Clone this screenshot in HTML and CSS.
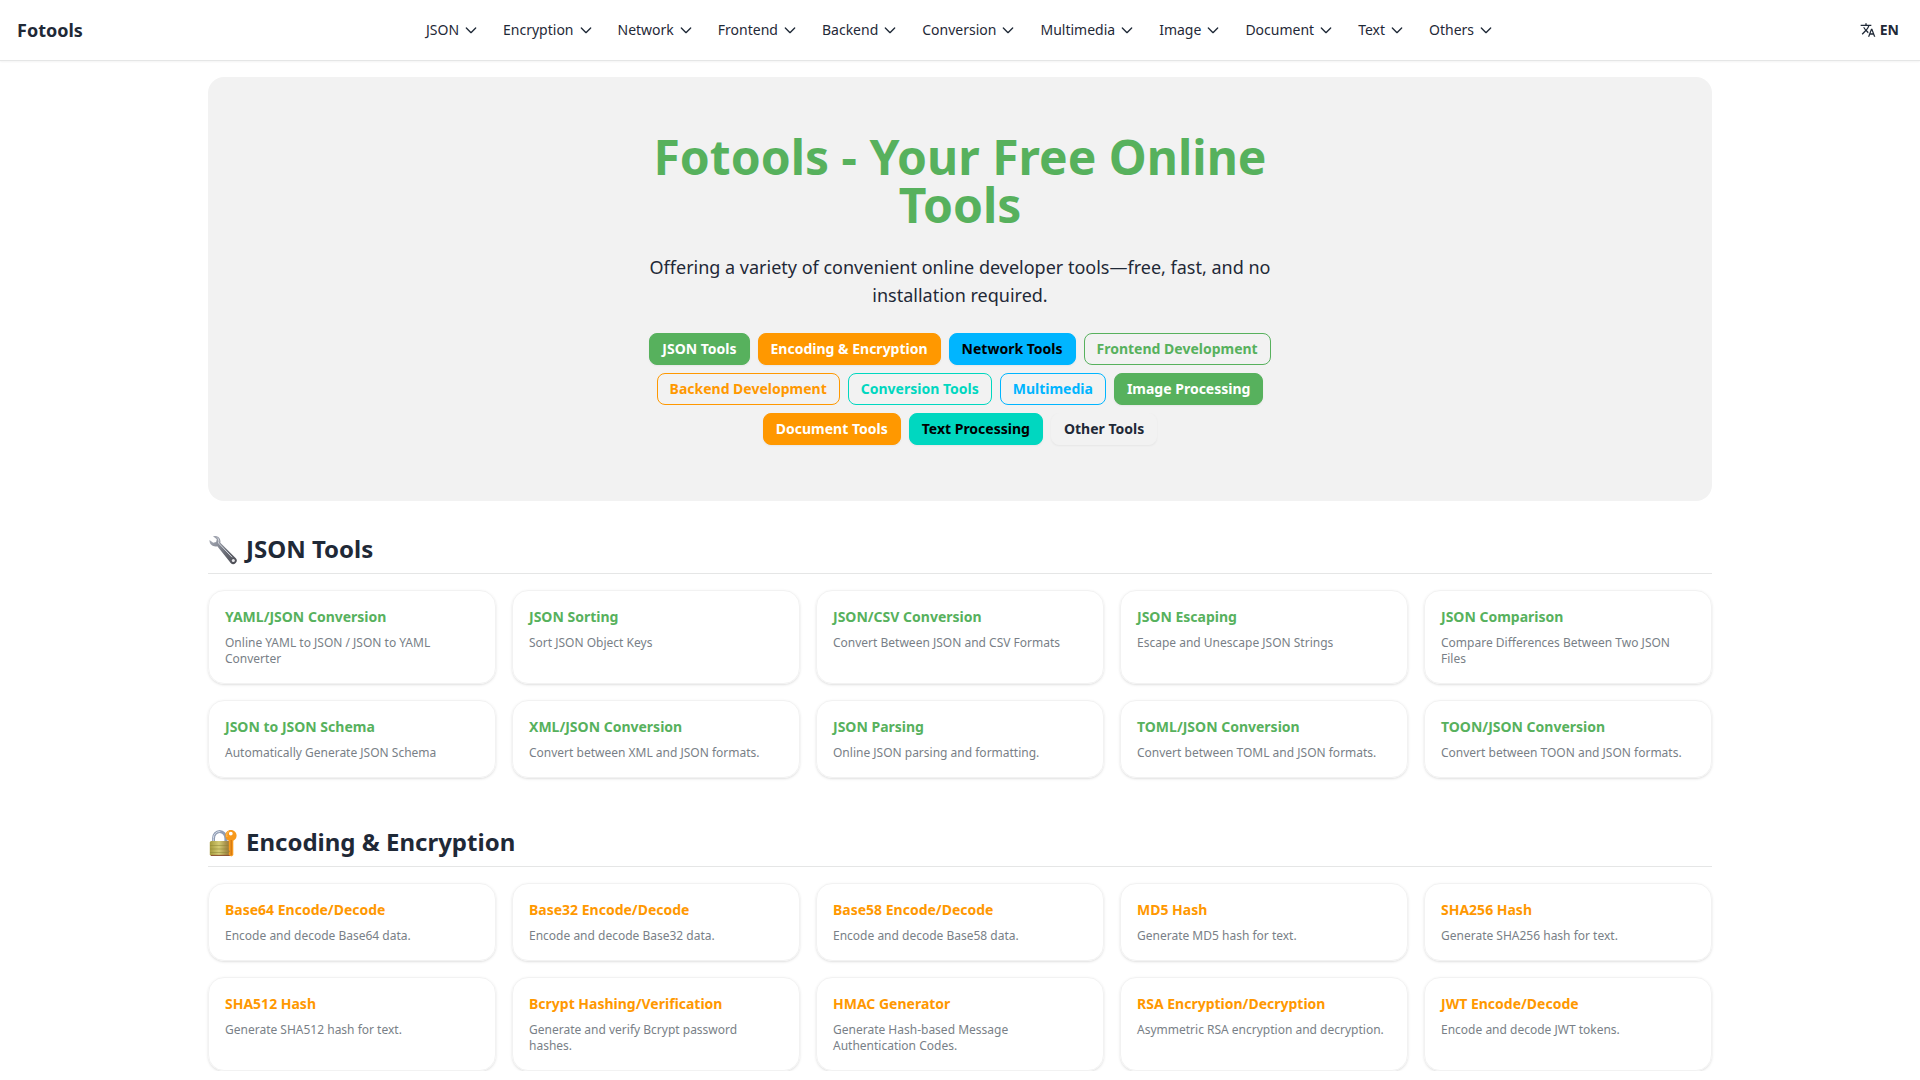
FILE: index.html
```html
<!DOCTYPE html>
<html lang="en">
<head>
<meta charset="utf-8">
<meta name="viewport" content="width=device-width, initial-scale=1">
<title>Fotools - Your Free Online Tools</title>
<link rel="stylesheet" href="styles.css">
</head>
<body>
<svg class="sprite" aria-hidden="true">
  <symbol id="chevron" viewBox="0 0 24 24"><path d="M19 9l-7 7-7-7" fill="none" stroke="currentColor" stroke-width="2" stroke-linecap="round" stroke-linejoin="round"/></symbol>
  <symbol id="translate" viewBox="0 0 24 24"><path fill="currentColor" d="M12.87 15.07l-2.54-2.51.03-.03A17.52 17.52 0 0 0 14.07 6H17V4h-7V2H8v2H1v2h11.17C11.5 7.92 10.44 9.75 9 11.35 8.07 10.32 7.3 9.19 6.69 8h-2c.73 1.63 1.73 3.17 2.98 4.56l-5.09 5.02L4 19l5-5 3.11 3.11.76-2.04zM18.500 10h-2L12 22h2l1.120-3h4.750L21 22h2l-4.500-12zm-2.620 7l1.620-4.330L19.120 17h-3.240z"/></symbol>
</svg>
<header class="navbar">
  <a class="brand" href="#">Fotools</a>
  <nav class="menu" aria-label="Tool categories">
    <button class="menu-item" type="button">JSON<svg class="icon"><use href="#chevron"/></svg></button>
    <button class="menu-item" type="button">Encryption<svg class="icon"><use href="#chevron"/></svg></button>
    <button class="menu-item" type="button">Network<svg class="icon"><use href="#chevron"/></svg></button>
    <button class="menu-item" type="button">Frontend<svg class="icon"><use href="#chevron"/></svg></button>
    <button class="menu-item" type="button">Backend<svg class="icon"><use href="#chevron"/></svg></button>
    <button class="menu-item" type="button">Conversion<svg class="icon"><use href="#chevron"/></svg></button>
    <button class="menu-item" type="button">Multimedia<svg class="icon"><use href="#chevron"/></svg></button>
    <button class="menu-item" type="button">Image<svg class="icon"><use href="#chevron"/></svg></button>
    <button class="menu-item" type="button">Document<svg class="icon"><use href="#chevron"/></svg></button>
    <button class="menu-item" type="button">Text<svg class="icon"><use href="#chevron"/></svg></button>
    <button class="menu-item" type="button">Others<svg class="icon"><use href="#chevron"/></svg></button>
  </nav>
  <div class="navbar-end">
    <button class="language" type="button"><svg class="icon"><use href="#translate"/></svg>EN</button>
  </div>
</header>
<main class="container">
  <section class="hero">
    <div class="hero-content">
      <h1 class="hero-title">Fotools - Your Free Online Tools</h1>
      <p class="hero-text">Offering a variety of convenient online developer tools—free, fast, and no installation required.</p>
      <div class="hero-links">
        <a class="btn btn-primary" href="#json">JSON Tools</a>
        <a class="btn btn-secondary" href="#encryption">Encoding &amp; Encryption</a>
        <a class="btn btn-info" href="#network">Network Tools</a>
        <a class="btn btn-outline outline-primary" href="#frontend">Frontend Development</a>
        <a class="btn btn-outline outline-secondary" href="#backend">Backend Development</a>
        <a class="btn btn-outline outline-accent" href="#conversion">Conversion Tools</a>
        <a class="btn btn-outline outline-info" href="#multimedia">Multimedia</a>
        <a class="btn btn-primary" href="#image">Image Processing</a>
        <a class="btn btn-secondary" href="#document">Document Tools</a>
        <a class="btn btn-accent" href="#text">Text Processing</a>
        <a class="btn btn-plain" href="#others">Other Tools</a>
      </div>
    </div>
  </section>
  <section class="tools tools-primary" id="json">
    <h2 class="tools-title">
      <svg class="title-icon" viewBox="0 0 32 32" aria-hidden="true">
        <defs>
          <linearGradient id="steel" x1="2" y1="4" x2="28" y2="30" gradientUnits="userSpaceOnUse"><stop offset="0" stop-color="#a9adb8"/><stop offset=".3" stop-color="#8b8f9a"/><stop offset=".6" stop-color="#6a6d76"/><stop offset="1" stop-color="#4c4d54"/></linearGradient>
        </defs>
        <path fill="url(#steel)" d="M5 3.200C9.500 2 13.200 5 12.300 9.800L27.600 25a3.500 3.500 0 0 1-4.900 5L9.300 13.300C5 14.200 1.200 11.500 1.500 7l3.700 2.700 2.900-.6.700-2.900z"/>
        <path fill="none" stroke="#d3d6de" stroke-width="1" stroke-linecap="round" d="M9.500 4.800c1.400 1.200 1.600 3 1 5.200l13.300 14"/>
        <circle cx="25.300" cy="27.500" r="1.500" fill="#e9e9ec"/>
      </svg>
      JSON Tools
    </h2>
    <div class="grid">
      <a class="card" href="#"><h3>YAML/JSON Conversion</h3><p>Online YAML to JSON / JSON to YAML Converter</p></a>
      <a class="card" href="#"><h3>JSON Sorting</h3><p>Sort JSON Object Keys</p></a>
      <a class="card" href="#"><h3>JSON/CSV Conversion</h3><p>Convert Between JSON and CSV Formats</p></a>
      <a class="card" href="#"><h3>JSON Escaping</h3><p>Escape and Unescape JSON Strings</p></a>
      <a class="card" href="#"><h3>JSON Comparison</h3><p>Compare Differences Between Two JSON Files</p></a>
      <a class="card" href="#"><h3>JSON to JSON Schema</h3><p>Automatically Generate JSON Schema</p></a>
      <a class="card" href="#"><h3>XML/JSON Conversion</h3><p>Convert between XML and JSON formats.</p></a>
      <a class="card" href="#"><h3>JSON Parsing</h3><p>Online JSON parsing and formatting.</p></a>
      <a class="card" href="#"><h3>TOML/JSON Conversion</h3><p>Convert between TOML and JSON formats.</p></a>
      <a class="card" href="#"><h3>TOON/JSON Conversion</h3><p>Convert between TOON and JSON formats.</p></a>
    </div>
  </section>
  <section class="tools tools-secondary" id="encryption">
    <h2 class="tools-title">
      <svg class="title-icon" viewBox="0 0 32 32" aria-hidden="true">
        <defs>
          <linearGradient id="brass"><stop offset="0" stop-color="#a59a3c"/><stop offset=".4" stop-color="#d3cb74"/><stop offset=".7" stop-color="#a8914a"/><stop offset="1" stop-color="#8a6534"/></linearGradient>
        </defs>
        <path fill="none" stroke="#8f9cb3" stroke-width="3" d="M5.500 17v-4.500a6.200 7 0 0 1 12.400 0V17"/>
        <path fill="none" stroke="#d4dbe8" stroke-width="1" d="M5.300 17v-4.500a6.400 7.200 0 0 1 7-7"/>
        <rect x="1.800" y="15" width="23" height="14.800" rx="1.500" fill="url(#brass)"/>
        <path stroke="#8c8434" stroke-opacity=".5" stroke-width="1" d="M2 19.500h22M2 23h22M2 26.500h22"/>
        <path stroke="#8a4a2c" stroke-width="1" d="M3 29.400h20"/>
        <path fill="#f7991c" fill-rule="evenodd" d="M22.800 4c3.400 0 5.800 2.500 5.800 5.500 0 2.400-1.300 4.200-3.300 5.300V29l-2 1.500-2.500-1.500v-2.500l1-1-1-1.500V14.800c-2-1-3.500-2.900-3.500-5.300C17.300 6.500 19.500 4 22.800 4zm0 1.700a1.900 1.900 0 1 0 0 3.800 1.900 1.900 0 0 0 0-3.800z"/>
        <path stroke="#c96f10" stroke-width="1" d="M23.200 14v15"/>
        <path fill="none" stroke="#ffc25c" stroke-width="1" d="M19 11c-.8-2.500 0-4.500 2-5.600"/>
      </svg>
      Encoding &amp; Encryption
    </h2>
    <div class="grid">
      <a class="card" href="#"><h3>Base64 Encode/Decode</h3><p>Encode and decode Base64 data.</p></a>
      <a class="card" href="#"><h3>Base32 Encode/Decode</h3><p>Encode and decode Base32 data.</p></a>
      <a class="card" href="#"><h3>Base58 Encode/Decode</h3><p>Encode and decode Base58 data.</p></a>
      <a class="card" href="#"><h3>MD5 Hash</h3><p>Generate MD5 hash for text.</p></a>
      <a class="card" href="#"><h3>SHA256 Hash</h3><p>Generate SHA256 hash for text.</p></a>
      <a class="card" href="#"><h3>SHA512 Hash</h3><p>Generate SHA512 hash for text.</p></a>
      <a class="card" href="#"><h3>Bcrypt Hashing/Verification</h3><p>Generate and verify Bcrypt password hashes.</p></a>
      <a class="card" href="#"><h3>HMAC Generator</h3><p>Generate Hash-based Message Authentication Codes.</p></a>
      <a class="card" href="#"><h3>RSA Encryption/Decryption</h3><p>Asymmetric RSA encryption and decryption.</p></a>
      <a class="card" href="#"><h3>JWT Encode/Decode</h3><p>Encode and decode JWT tokens.</p></a>
    </div>
  </section>
</main>
</body>
</html>
```
FILE: styles.css
```css
:root {
  --primary: #57b15d;
  --secondary: #ff9800;
  --accent: #00d7c0;
  --info: #00b5ff;
  --text: #1f2937;
  --muted: #797f87;
  --surface: #f2f2f2;
  --line: #e5e6e6;
}

* {
  box-sizing: border-box;
  margin: 0;
  padding: 0;
}

body {
  font-family: "Noto Sans", sans-serif;
  font-size: 14px;
  line-height: 20px;
  color: var(--text);
  background: #fff;
}

a {
  color: inherit;
  text-decoration: none;
}

button {
  font: inherit;
  color: inherit;
  background: none;
  border: 0;
  cursor: pointer;
}

.sprite {
  display: none;
}

.icon {
  width: 16px;
  height: 16px;
  flex: none;
}

.navbar {
  display: grid;
  grid-template-columns: 1fr auto 1fr;
  align-items: center;
  min-height: 61px;
  padding: 0 8px;
  border-bottom: 1px solid var(--line);
  box-shadow: 0 1px 2px rgb(0 0 0 / 5%);
}

.brand {
  padding: 0 9px;
  font-size: 18px;
  line-height: 28px;
  font-weight: 700;
}

.menu,
.menu-item,
.language {
  display: flex;
  align-items: center;
}

.menu-item {
  gap: 4px;
  padding: 8px 12px;
}

.navbar-end {
  display: flex;
  justify-content: flex-end;
}

.language {
  gap: 4px;
  padding: 6px 13px;
  font-weight: 700;
}

.container {
  max-width: 1536px;
  margin: 0 auto;
  padding: 16px 16px 0;
}

.hero {
  display: flex;
  justify-content: center;
  margin-bottom: 32px;
  padding: 56px 16px;
  border-radius: 16px;
  background: var(--surface);
}

.hero-content {
  max-width: 640px;
  text-align: center;
}

.hero-title {
  font-size: 48px;
  line-height: 48px;
  font-weight: 700;
  color: var(--primary);
}

.hero-text {
  padding: 24px 0;
  font-size: 18px;
  line-height: 28px;
}

.hero-links {
  display: flex;
  flex-wrap: wrap;
  justify-content: center;
  gap: 8px;
}

.btn {
  height: 32px;
  padding: 5px 12px;
  border: 1px solid transparent;
  border-radius: 8px;
  font-weight: 700;
  box-shadow: 0 1px 2px rgb(0 0 0 / 5%);
}

.btn-primary {
  color: #fff;
  background: var(--primary);
  border-color: var(--primary);
}

.btn-secondary {
  color: #fff;
  background: var(--secondary);
  border-color: var(--secondary);
}

.btn-info {
  color: #000;
  background: var(--info);
  border-color: var(--info);
}

.btn-accent {
  color: #000;
  background: var(--accent);
  border-color: var(--accent);
}

.btn-plain {
  background: var(--surface);
  border-color: var(--surface);
}

.btn-outline {
  border-color: currentColor;
  box-shadow: none;
}

.outline-primary {
  color: var(--primary);
}

.outline-secondary {
  color: var(--secondary);
}

.outline-accent {
  color: var(--accent);
}

.outline-info {
  color: var(--info);
}

.tools + .tools {
  margin-top: 48px;
}

.tools-title {
  display: flex;
  align-items: center;
  gap: 6px;
  margin-bottom: 16px;
  padding-bottom: 8px;
  border-bottom: 1px solid var(--line);
  font-size: 24px;
  line-height: 32px;
  font-weight: 700;
}

.title-icon {
  width: 32px;
  height: 32px;
  flex: none;
}

.grid {
  display: grid;
  grid-template-columns: repeat(5, minmax(0, 1fr));
  gap: 16px;
}

.card {
  padding: 16px;
  border: 1px solid var(--surface);
  border-radius: 16px;
  box-shadow: 0 1px 3px rgb(0 0 0 / 10%), 0 1px 2px -1px rgb(0 0 0 / 10%);
}

.card h3 {
  margin-bottom: 8px;
  font-size: 14px;
  line-height: 20px;
  font-weight: 700;
}

.card p {
  font-size: 12px;
  line-height: 16px;
  color: var(--muted);
}

.tools-primary h3 {
  color: var(--primary);
}

.tools-secondary h3 {
  color: var(--secondary);
}
```
